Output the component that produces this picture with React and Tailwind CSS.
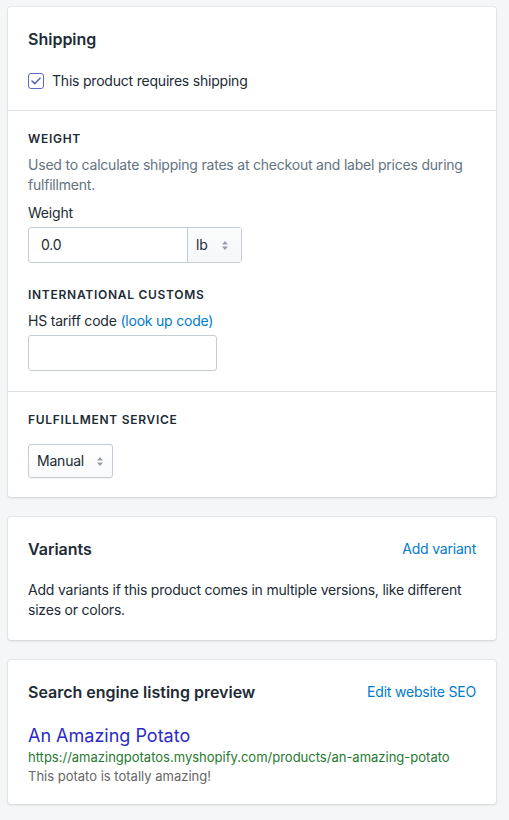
import React from "react";

function Arrows() {
  return (
    <svg width="8" height="11" viewBox="0 0 8 11" className="text-[#919eab]">
      <path d="M4 1 L7 4.5 H1 Z" fill="currentColor" />
      <path d="M4 10 L7 6.5 H1 Z" fill="currentColor" />
    </svg>
  );
}

function Card({ children }) {
  return (
    <div className="rounded-[3px] bg-white shadow-[0_0_0_1px_rgba(63,63,68,0.05),0_1px_3px_0_rgba(63,63,68,0.15)]">
      {children}
    </div>
  );
}

function Heading({ children }) {
  return <h2 className="text-[16px] font-semibold leading-6 tracking-normal">{children}</h2>;
}

function Subheading({ children }) {
  return (
    <h3 className="text-[12px] font-semibold uppercase leading-4 tracking-[0.06em] text-[#212b36]">{children}</h3>
  );
}

export default function App() {
  return (
    <div
      className="min-h-[820px] bg-[#f4f6f8] pl-2 pr-[13px] pt-[7px] pb-4 text-[14px] leading-5 tracking-[-0.015em] text-[#212b36]"
      style={{ fontFamily: "Inter, 'Noto Sans', sans-serif" }}
    >
      <div className="flex flex-col gap-5">
        <Card>
          <div className="px-5 pt-5">
            <Heading>Shipping</Heading>
          </div>
          <div className="px-5 pt-5 pb-[19px]">
            <label className="flex items-center gap-2">
              <span className="flex h-4 w-4 items-center justify-center rounded-[3px] border border-[#5c6ac4] bg-white">
                <svg width="10" height="8" viewBox="0 0 10 8">
                  <path d="M1 4 L3.8 6.6 L9 1.2" fill="none" stroke="#5c6ac4" strokeWidth="1.6" strokeLinecap="round" strokeLinejoin="round" />
                </svg>
              </span>
              <span>This product requires shipping</span>
            </label>
          </div>
          <div className="border-t border-[#dfe3e8] px-5 py-5">
            <Subheading>Weight</Subheading>
            <p className="mt-2 text-[#637381]">
              Used to calculate shipping rates at checkout and label prices during fulfillment.
            </p>
            <div className="mt-2">Weight</div>
            <div className="mt-1 flex h-9 w-[214px] rounded-[3px] border border-[#c4cdd5]">
              <div className="flex flex-1 items-center px-3">0.0</div>
              <div className="flex w-[54px] items-center justify-between border-l border-[#c4cdd5] bg-gradient-to-b from-[#fafbfb] to-[#f6f7f9] px-2 pr-3">
                <span>lb</span>
                <Arrows />
              </div>
            </div>
            <div className="mt-6">
              <Subheading>International customs</Subheading>
            </div>
            <div className="mt-2">
              HS tariff code <span className="text-[#007ace]">(look up code)</span>
            </div>
            <div className="mt-1 h-9 w-[189px] rounded-[3px] border border-[#c4cdd5] bg-white" />
          </div>
          <div className="border-t border-[#dfe3e8] px-5 pt-5 pb-[19px]">
            <Subheading>Fulfillment service</Subheading>
            <div className="mt-4 flex h-[34px] w-[85px] items-center justify-between rounded-[3px] border border-[#c4cdd5] bg-gradient-to-b from-white to-[#f9fafb] px-2 shadow-[0_1px_0_0_rgba(22,29,37,0.05)]">
              <span>Manual</span>
              <Arrows />
            </div>
          </div>
        </Card>

        <Card>
          <div className="flex items-center justify-between px-5 pt-5">
            <Heading>Variants</Heading>
            <span className="text-[#007ace]">Add variant</span>
          </div>
          <div className="px-5 pt-[19px] pb-5">
            <p>Add variants if this product comes in multiple versions, like different sizes or colors.</p>
          </div>
        </Card>

        <Card>
          <div className="flex items-center justify-between px-5 pt-5">
            <Heading>Search engine listing preview</Heading>
            <span className="text-[#007ace]">Edit website SEO</span>
          </div>
          <div className="px-5 pt-5 pb-[18px] tracking-normal">
            <div className="text-[18px] leading-6 text-[#2b2bc4]">An Amazing Potato</div>
            <div className="text-[13px] leading-[18px] text-[#1f7a2f]">
              https://amazingpotatos.myshopify.com/products/an-amazing-potato
            </div>
            <div className="text-[13px] leading-5 text-[#666]">This potato is totally amazing!</div>
          </div>
        </Card>
      </div>
    </div>
  );
}
